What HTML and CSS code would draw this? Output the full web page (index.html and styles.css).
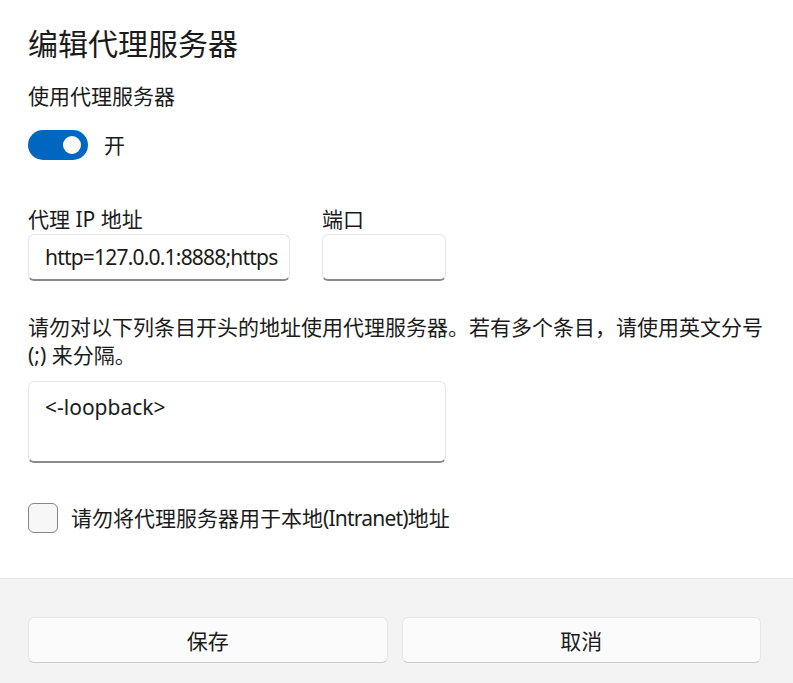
FILE: index.html
```html
<!DOCTYPE html>
<html lang="zh-CN">
<head>
<meta charset="utf-8">
<title>编辑代理服务器</title>
<link rel="stylesheet" href="styles.css">
</head>
<body>
<div class="dialog">
  <main class="content">
    <h1 class="title">编辑代理服务器</h1>
    <div class="label use-label">使用代理服务器</div>
    <div class="toggle-row">
      <span class="toggle"><span class="knob"></span></span>
      <span class="toggle-text">开</span>
    </div>
    <div class="fields">
      <div class="field">
        <div class="label">代理 IP 地址</div>
        <div class="textbox ip"><span class="value narrow">http=127.0.0.1:8888;https</span></div>
      </div>
      <div class="field">
        <div class="label">端口</div>
        <div class="textbox port"></div>
      </div>
    </div>
    <p class="desc">请勿对以下列条目开头的地址使用代理服务器。若有多个条目，请使用英文分号 (;) 来分隔。</p>
    <div class="textarea"><span class="value">&lt;-loopback&gt;</span></div>
    <div class="check-row">
      <span class="checkbox"></span>
      <span class="check-text">请勿将代理服务器用于本地<span class="narrow">(Intranet)</span>地址</span>
    </div>
  </main>
  <footer class="footer">
    <button class="btn">保存</button>
    <button class="btn">取消</button>
  </footer>
</div>
</body>
</html>
```
FILE: styles.css
```css
html, body {
  margin: 0;
  padding: 0;
  background: #ffffff;
}
body {
  font-family: "Noto Sans", "Noto Sans CJK SC", sans-serif;
  color: #1b1b1b;
  font-size: 21px;
  line-height: 28px;
  width: 793px;
  height: 683px;
  overflow: hidden;
}
.dialog {
  display: flex;
  flex-direction: column;
  height: 683px;
}
.content {
  padding: 0 32px 0 28px;
  display: flex;
  flex-direction: column;
  align-items: flex-start;
}
.title {
  margin: 24px 0 0;
  font-size: 30px;
  line-height: 40px;
  font-weight: 400;
}
.label {
  font-size: 21px;
  line-height: 28px;
}
.use-label {
  margin-top: 18px;
}
.toggle-row {
  margin-top: 20px;
  display: flex;
  align-items: center;
  gap: 16px;
}
.toggle {
  width: 60px;
  height: 30px;
  border-radius: 15px;
  background: #0067c0;
  display: flex;
  align-items: center;
  justify-content: flex-end;
  padding-right: 7px;
  box-sizing: border-box;
}
.knob {
  width: 18px;
  height: 18px;
  border-radius: 50%;
  background: #ffffff;
}
.toggle-text {
  line-height: 28px;
}
.fields {
  margin-top: 45px;
  display: flex;
  gap: 32px;
}
.field .label {
  margin-bottom: 1px;
}
.textbox {
  height: 47px;
  box-sizing: border-box;
  border: 1px solid #e5e5e5;
  border-bottom: 2px solid #8a8a8a;
  border-radius: 6px;
  background: #ffffff;
  display: flex;
  align-items: center;
  padding: 0 8px 0 16px;
  overflow: hidden;
  white-space: nowrap;
}
.narrow {
  letter-spacing: -0.8px;
}
.ip {
  width: 262px;
}
.port {
  width: 124px;
}
.desc {
  margin: 32px 0 0;
  width: 740px;
}
.textarea {
  margin-top: 12px;
  width: 418px;
  height: 82px;
  box-sizing: border-box;
  border: 1px solid #e5e5e5;
  border-bottom: 2px solid #8a8a8a;
  border-radius: 6px;
  padding: 11px 16px;
}
.check-row {
  margin-top: 40px;
  display: flex;
  align-items: center;
  gap: 13px;
}
.checkbox {
  width: 30px;
  height: 30px;
  box-sizing: border-box;
  border: 1.5px solid #858585;
  border-radius: 6px;
  background: #f7f7f7;
}
.footer {
  margin-top: 45px;
  flex: 1;
  border-top: 1px solid #e5e5e5;
  background: #f3f3f3;
  padding: 38px 32px 0 28px;
  display: flex;
  gap: 14px;
  align-items: flex-start;
}
.btn {
  flex: 1;
  height: 46px;
  box-sizing: border-box;
  border: 1px solid #e5e5e5;
  border-bottom-color: #cccccc;
  border-radius: 6px;
  background: #fbfbfb;
  font-family: inherit;
  font-size: 21px;
  color: #1b1b1b;
  padding: 0;
}
```
